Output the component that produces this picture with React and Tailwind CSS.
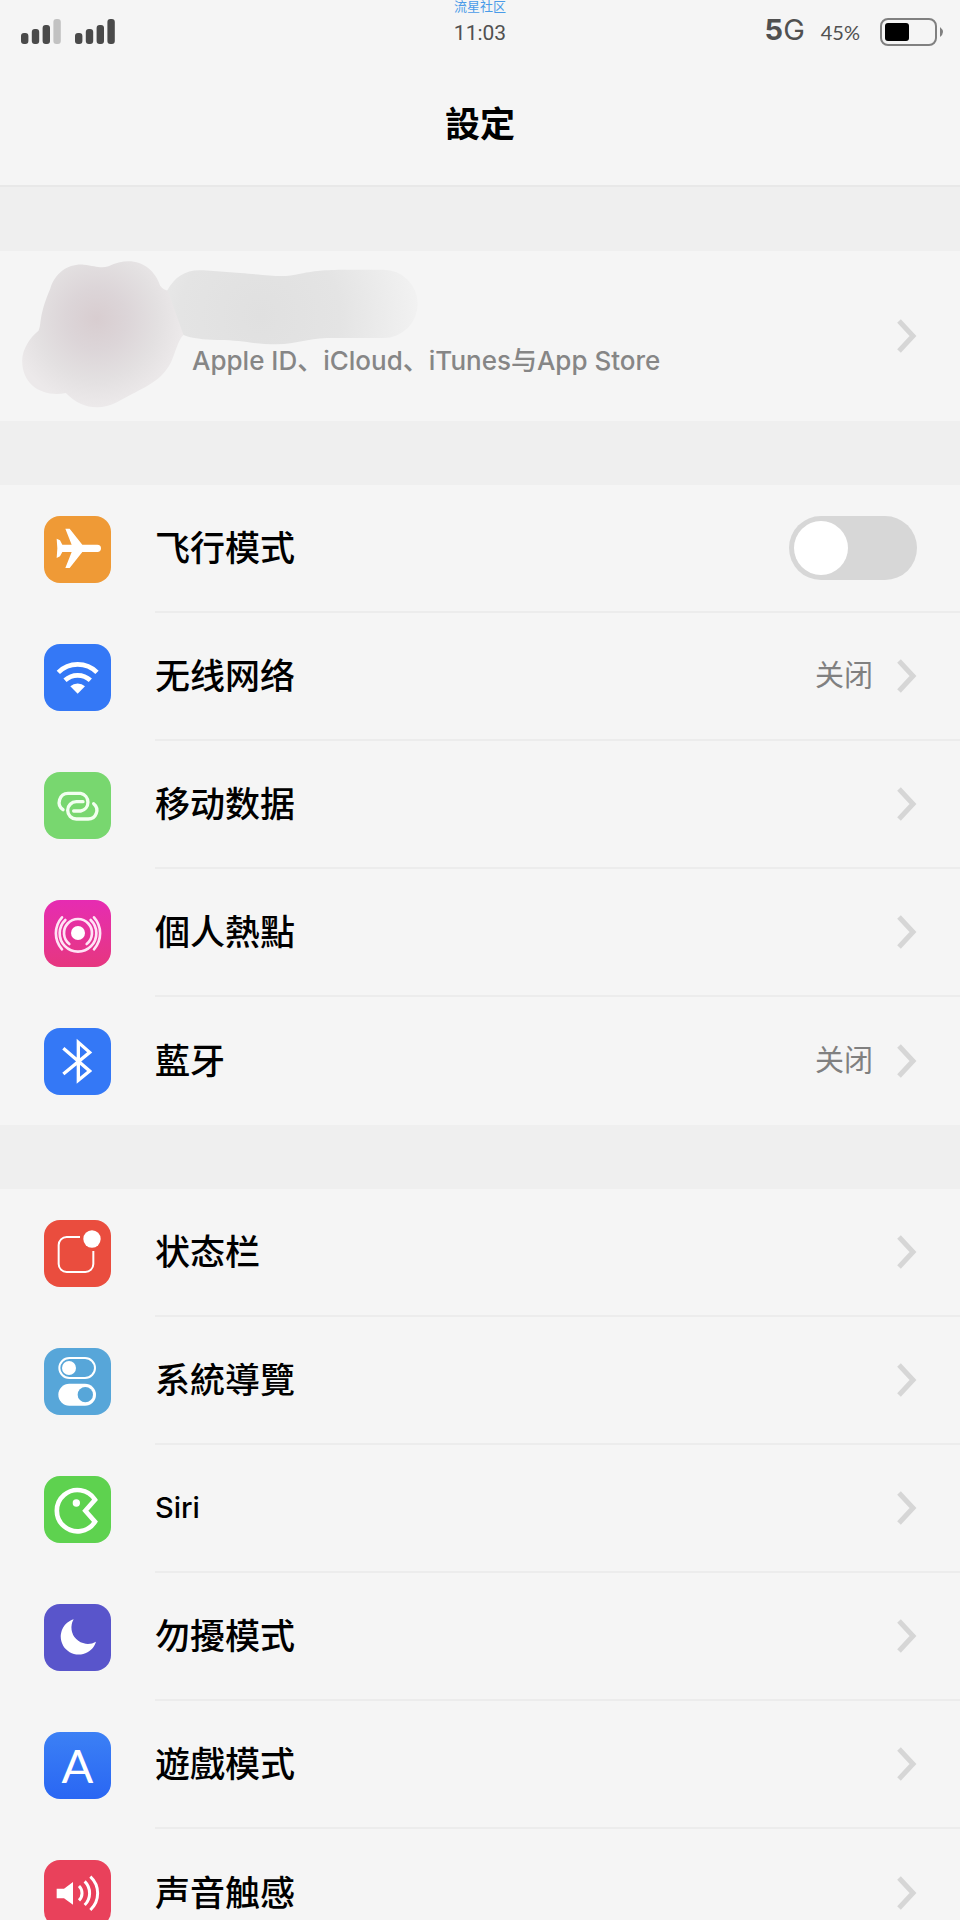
import React, { useState } from 'react';

const tile = 'size-[67px] shrink-0 rounded-2xl';

const AirplaneIcon = () => (
  <svg viewBox="0 0 201 201" className={`${tile} bg-[#ef9a36]`} fill="#fff" aria-hidden="true">
    <path d="M38 68L48 73L55 86H83L64 38H77L115 86H160A11 11 0 0 1 160 108H115L77 156H64L83 108H55L48 121L38 126L40 97Z" />
  </svg>
);

const WifiIcon = () => (
  <svg viewBox="0 0 201 201" className={`${tile} bg-[#3478f6]`} fill="none" stroke="#fff" strokeWidth="14" aria-hidden="true">
    <path d="M43 85A82 82 0 0 1 159 85" />
    <path d="M63 109A56 56 0 0 1 139 109" />
    <path d="M79 127A32 32 0 0 1 123 127L101 149Z" fill="#fff" stroke="none" />
  </svg>
);

const LinkIcon = () => (
  <svg viewBox="0 0 201 201" className={`${tile} bg-[#78d76f]`} fill="none" stroke="#f2fff0" strokeWidth="10" strokeLinecap="round" aria-hidden="true">
    <path d="M57 113A27 27 0 0 1 72 64H110A27 27 0 0 1 110 117H89" />
    <path d="M117 89H97A26 26 0 0 0 97 141H132A26 26 0 0 0 149 95" />
  </svg>
);

const HotspotIcon = () => (
  <svg viewBox="0 0 201 201" className={`${tile} bg-linear-to-b from-[#e62bb2] to-[#e6367f]`} fill="none" stroke="#ffe3f5" strokeWidth="8" strokeLinecap="round" aria-hidden="true">
    <circle cx="102" cy="99" r="21" fill="#fff" stroke="none" />
    <path d="M76 132A42 42 0 1 1 128 132" />
    <path d="M64 60A55 55 0 1 0 140 60" />
    <path d="M54 52A72 72 0 0 0 54 148M150 52A72 72 0 0 1 150 148" />
  </svg>
);

const BluetoothIcon = () => (
  <svg viewBox="0 0 201 201" className={`${tile} bg-[#3478f6]`} fill="none" stroke="#fff" strokeWidth="10" aria-hidden="true">
    <path d="M58 61L137 129L103 157V43L137 73L58 138" />
  </svg>
);

const StatusBarIcon = () => (
  <svg viewBox="0 0 201 201" className={`${tile} bg-[#ea4d3e]`} fill="none" stroke="#fff" strokeWidth="6" aria-hidden="true">
    <path d="M108 51H68A24 24 0 0 0 44 75V132A24 24 0 0 0 68 156H124A24 24 0 0 0 148 132V93" />
    <circle cx="144" cy="57" r="26" fill="#fff" stroke="none" />
  </svg>
);

const ControlIcon = () => (
  <svg viewBox="0 0 201 201" className={`${tile} bg-[#57a6d9]`} fill="#fff" aria-hidden="true">
    <rect x="46" y="30" width="107" height="60" rx="30" fill="none" stroke="#fff" strokeWidth="6" />
    <circle cx="75" cy="60" r="21" />
    <rect x="43" y="107" width="113" height="66" rx="33" />
    <circle cx="124" cy="140" r="23" fill="#57a6d9" />
  </svg>
);

const SiriIcon = () => (
  <svg viewBox="0 0 201 201" className={`${tile} bg-[#5ed24f]`} fill="none" stroke="#fff" strokeWidth="14" aria-hidden="true">
    <path d="M153 71A62 62 0 1 0 153 137L124 104Z" />
    <circle cx="97" cy="81" r="11" fill="#fff" stroke="none" />
  </svg>
);

const MoonIcon = () => (
  <svg viewBox="0 0 201 201" className={`${tile} bg-[#5955cb]`} fill="#fff" aria-hidden="true">
    <path d="M89 46A54 54 0 1 0 156 113A49 49 0 0 1 89 46Z" />
  </svg>
);

const GameIcon = () => (
  <span
    className={`${tile} flex items-center justify-center bg-linear-to-b from-[#3c80f5] to-[#2a66f3] font-['Lato',sans-serif] text-[47px] leading-none text-white`}
    aria-hidden="true"
  >
    A
  </span>
);

const SoundIcon = () => (
  <svg viewBox="0 0 201 201" className={`${tile} bg-[#e9415b]`} fill="none" stroke="#fff" strokeWidth="9" aria-hidden="true">
    <path d="M38 86H60L87 66V134L60 115H38Z" fill="#fff" stroke="none" />
    <path d="M105 78A30 30 0 0 1 105 121" />
    <path d="M122 64A50 50 0 0 1 122 135" />
    <path d="M139 50A68 68 0 0 1 139 150" />
  </svg>
);

const Chevron = () => (
  <svg viewBox="0 0 20 34" className="h-[34px] w-5 shrink-0" fill="none" stroke="#d6d6d6" strokeWidth="5" aria-hidden="true">
    <path d="M2 2L16 17L2 32" />
  </svg>
);

const Signal = ({ level }) => (
  <svg viewBox="0 0 40 25" className="h-[25px] w-10" aria-hidden="true">
    {[11, 15, 19, 25].map((h, i) => (
      <rect
        key={h}
        x={i * 10.8}
        y={25 - h}
        width="7.4"
        height={h}
        rx="3"
        fill={i < level ? '#4a4a4a' : '#c2c2c2'}
      />
    ))}
  </svg>
);

const Battery = () => (
  <svg viewBox="0 0 64 28" className="h-7 w-16" aria-hidden="true">
    <rect x="1" y="1" width="55" height="26" rx="7" fill="none" stroke="#808080" strokeWidth="2" />
    <rect x="5" y="5" width="24" height="18" rx="3" />
    <path d="M60 9Q66 14 60 19Z" fill="#808080" />
  </svg>
);

// Blurred-out avatar and name
const Smudge = () => (
  <svg viewBox="0 0 1280 450" className="absolute top-2 left-0 h-[150px] w-[427px]" aria-hidden="true">
    <defs>
      <radialGradient id="avatar" gradientUnits="userSpaceOnUse" cx="290" cy="180" r="260">
        <stop offset="0" stopColor="#d8cdd0" />
        <stop offset="0.35" stopColor="#dcd5d8" />
        <stop offset="0.7" stopColor="#e3e0e1" />
        <stop offset="1" stopColor="#ece9ea" />
      </radialGradient>
      <radialGradient id="name" gradientUnits="userSpaceOnUse" cx="780" cy="170" r="480">
        <stop offset="0" stopColor="#e0e0e0" />
        <stop offset="0.5" stopColor="#e4e4e4" />
        <stop offset="1" stopColor="#f2f2f2" />
      </radialGradient>
    </defs>
    <path
      d="M500 96C525 50 560 30 610 34L720 42C820 50 850 56 900 44C950 34 980 32 1050 32H1150A101 101 0 0 1 1150 237H980C920 240 890 254 830 256C760 256 720 242 650 243C610 242 575 238 550 228L480 170Z"
      fill="url(#name)"
    />
    <path
      d="M150 90C165 40 205 14 250 17C285 20 300 30 325 22C400 -15 460 20 480 80C487 90 495 92 503 95L550 228C530 245 520 310 500 330C470 375 410 395 350 430C295 458 240 446 197 402C130 415 66 380 66 305C66 270 90 235 115 215C125 195 115 170 150 90Z"
      fill="url(#avatar)"
    />
  </svg>
);

const network = [
  { label: '无线网络', value: '关闭', Icon: WifiIcon },
  { label: '移动数据', Icon: LinkIcon },
  { label: '個人熱點', Icon: HotspotIcon },
  { label: '藍牙', value: '关闭', Icon: BluetoothIcon },
];

const system = [
  { label: '状态栏', Icon: StatusBarIcon },
  { label: '系統導覽', Icon: ControlIcon },
  { label: 'Siri', Icon: SiriIcon, latin: true },
  { label: '勿擾模式', Icon: MoonIcon },
  { label: '遊戲模式', Icon: GameIcon },
  { label: '声音触感', Icon: SoundIcon },
];

const Row = ({ label, value, Icon, latin, divider }) => (
  <a href="#" className="flex h-32 items-center gap-11 pl-11">
    <Icon />
    <span className={`flex h-full flex-1 items-center gap-6 pr-[43px] ${divider ? 'border-b-2 border-[#ececec]' : ''}`}>
      <span className={`flex-1 font-medium text-black ${latin ? 'text-[29px]' : 'text-[35px]'}`}>{label}</span>
      {value && <span className="text-[29px] text-[#808080]">{value}</span>}
      <Chevron />
    </span>
  </a>
);

const App = () => {
  const [airplane, setAirplane] = useState(false);

  return (
    <div
      lang="zh-CN"
      className="flex h-screen flex-col bg-[#efefef] font-['Inter','Noto_Sans_CJK_SC','Noto_Sans_CJK_TC',sans-serif]"
    >
      <header className="shrink-0 border-b-2 border-[#e8e8e8] bg-[#f5f5f5]">
        <div className="grid h-16 grid-cols-3 text-[#505050]">
          <div className="flex items-start gap-[14px] pt-[19px] pl-[21px]">
            <Signal level={3} />
            <Signal level={4} />
          </div>
          <div className="flex flex-col items-center">
            <span className="text-[13px] leading-[13px] text-[#4a9be8]">流星社区</span>
            <span className="font-['Roboto',sans-serif] text-[21px] leading-10">11:03</span>
          </div>
          <div className="flex items-start justify-end pt-[18px] pr-4">
            <span className="text-[29px] leading-6">
              <b>5</b>G
            </span>
            <span className="mr-5 ml-4 font-['Lato',sans-serif] text-xl leading-7">45%</span>
            <Battery />
          </div>
        </div>
        <h1 className="flex h-[121px] items-center justify-center text-[35px] font-bold text-black">設定</h1>
      </header>

      <main className="flex min-h-0 flex-1 flex-col gap-16 overflow-y-auto pt-16 [scrollbar-width:none]">
        <a href="#" className="relative flex h-[170px] shrink-0 items-center justify-between bg-[#f5f5f5] pr-[43px] pl-48">
          <Smudge />
          <span className="relative pt-12 text-[26px] font-medium text-[#868686]">
            Apple ID、iCloud、iTunes与App Store
          </span>
          <Chevron />
        </a>

        <section className="shrink-0 bg-[#f5f5f5]">
          <label className="flex h-32 items-center gap-11 pl-11">
            <AirplaneIcon />
            <span className="flex h-full flex-1 items-center border-b-2 border-[#ececec] pr-[43px]">
              <span className="flex-1 text-[35px] font-medium text-black">飞行模式</span>
              <input
                type="checkbox"
                role="switch"
                checked={airplane}
                onChange={(e) => setAirplane(e.target.checked)}
                className="flex h-16 w-32 appearance-none items-center rounded-full bg-[#d7d7d7] px-[5px] before:size-[54px] before:rounded-full before:bg-white checked:justify-end checked:bg-[#5ed24f]"
              />
            </span>
          </label>
          {network.map((item, i) => (
            <Row key={item.label} {...item} divider={i < network.length - 1} />
          ))}
        </section>

        <section className="shrink-0 bg-[#f5f5f5]">
          {system.map((item, i) => (
            <Row key={item.label} {...item} divider={i < system.length - 1} />
          ))}
        </section>
      </main>
    </div>
  );
};

export default App;
